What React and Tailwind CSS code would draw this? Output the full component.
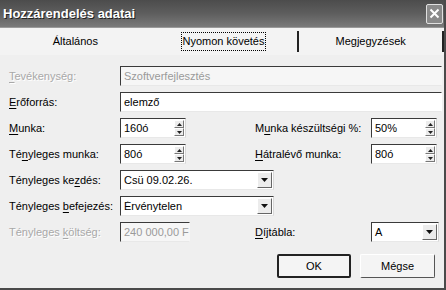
import React from 'react';

const Acc = ({ children }) => <span className="underline underline-offset-2">{children}</span>;

function Label({ children, disabled, w = 'w-[111px]' }) {
  return (
    <div
      className={`${w} shrink-0 whitespace-nowrap ${
        disabled ? 'text-[#a8a8a8] [text-shadow:1px_1px_0_#ffffff]' : 'text-black'
      }`}
    >
      {children}
    </div>
  );
}

function Field({ value, w, disabled, children, noRight }) {
  return (
    <div
      className={`${w} h-[20px] flex items-center border border-t-[#3a3a3a] border-l-[#3a3a3a] ${
        noRight ? 'border-r-transparent' : 'border-r-[#d8d8d8]'
      } border-b-[#e8e8e8] ${disabled ? 'bg-[#f6f6f6] text-[#9a9a9a]' : 'bg-white text-black'}`}
    >
      <span className="flex-1 pl-[3px] whitespace-nowrap overflow-hidden">{value}</span>
      {children}
    </div>
  );
}

function Spin({ value, w }) {
  return (
    <Field value={value} w={w}>
      <div className="flex flex-col h-full py-[1px] pr-[1px] gap-[0px]">
        {['up', 'down'].map((d) => (
          <div
            key={d}
            className="flex-1 w-[10px] bg-[#ececec] border border-t-white border-l-white border-r-[#777] border-b-[#777] flex items-center justify-center"
          >
            <svg width="5" height="3" viewBox="0 0 5 3">
              <path d={d === 'up' ? 'M0 3 L2.5 0 L5 3 Z' : 'M0 0 L2.5 3 L5 0 Z'} fill="#222" />
            </svg>
          </div>
        ))}
      </div>
    </Field>
  );
}

function Combo({ value, w }) {
  return (
    <Field value={value} w={w}>
      <div className="h-full py-[1px] pr-[1px]">
        <div className="h-full w-[15px] bg-[#ececec] border border-t-white border-l-white border-r-[#666] border-b-[#666] flex items-center justify-center">
          <svg width="7" height="4" viewBox="0 0 7 4">
            <path d="M0 0 L7 0 L3.5 4 Z" fill="#111" />
          </svg>
        </div>
      </div>
    </Field>
  );
}

function Row({ children }) {
  return <div className="flex items-center h-[20px]">{children}</div>;
}

export default function App() {
  return (
    <div className="w-[446px] h-[290px] overflow-hidden bg-[#efefef] flex flex-col font-['Liberation_Sans',Arial,sans-serif] text-[11px] leading-none border-r-2 border-b-2 border-r-[#4a4a4a] border-b-[#4a4a4a]">
      {/* title bar */}
      <div className="h-[28px] shrink-0 flex items-center justify-between bg-gradient-to-b from-[#4c4c4c] via-[#5e5e5e] to-[#7a7a7a] border-b border-[#9a9a9a]">
        <span className="pl-[3px] text-white font-bold text-[13px] [text-shadow:1px_1px_0_#222]">
          Hozzárendelés adatai
        </span>
        <div className="w-[17px] h-[20px] mr-[1px] border border-[#e0e0e0] bg-[#8a8a8a] rounded-[2px] flex items-center justify-center">
          <svg width="11" height="11" viewBox="0 0 11 11">
            <path d="M1.5 1.5 L9.5 9.5 M9.5 1.5 L1.5 9.5" stroke="#fff" strokeWidth="2" />
          </svg>
        </div>
      </div>

      {/* tabs */}
      <div className="h-[27px] shrink-0 flex items-center bg-[#f3f3f3]">
        <div className="w-[150px] flex justify-center pl-[1px]">Általános</div>
        <div className="w-[148px] flex justify-center">
          <span className="border border-dotted border-black px-[1px] py-[3px]">Nyomon követés</span>
        </div>
        <div className="w-[2px] h-[21px] bg-[#222]" />
        <div className="w-[143px] flex justify-center">Megjegyzések</div>
        <div className="w-[2px] h-[21px] bg-[#222]" />
      </div>

      {/* form */}
      <div className="flex flex-col pl-[9px] pt-[11px] gap-[6px]">
        <Row>
          <Label disabled>
            <Acc>T</Acc>evékenység:
          </Label>
          <Field value="Szoftverfejlesztés" w="w-[322px]" disabled noRight />
        </Row>
        <Row>
          <Label>
            <Acc>E</Acc>rőforrás:
          </Label>
          <Field value="elemző" w="w-[322px]" noRight />
        </Row>
        <Row>
          <Label>
            <Acc>M</Acc>unka:
          </Label>
          <Spin value="160ó" w="w-[66px]" />
          <div className="w-[69px]" />
          <Label w="w-[116px]">
            M<Acc>u</Acc>nka készültségi %:
          </Label>
          <Spin value="50%" w="w-[66px]" />
        </Row>
        <Row>
          <Label>
            Té<Acc>n</Acc>yleges munka:
          </Label>
          <Spin value="80ó" w="w-[66px]" />
          <div className="w-[69px]" />
          <Label w="w-[116px]">
            <Acc>H</Acc>átralévő munka:
          </Label>
          <Spin value="80ó" w="w-[66px]" />
        </Row>
        <Row>
          <Label>
            Tényleges ke<Acc>z</Acc>dés:
          </Label>
          <Combo value="Csü 09.02.26." w="w-[154px]" />
        </Row>
        <Row>
          <Label>
            Tényleges <Acc>b</Acc>efejezés:
          </Label>
          <Combo value="Érvénytelen" w="w-[154px]" />
        </Row>
        <Row>
          <Label disabled>
            Tényleges <Acc>k</Acc>öltség:
          </Label>
          <Field value="240 000,00 F" w="w-[70px]" disabled noRight />
          <div className="w-[65px]" />
          <Label w="w-[116px]">
            <Acc>D</Acc>íjtábla:
          </Label>
          <Combo value="A" w="w-[68px]" />
        </Row>
      </div>

      {/* buttons */}
      <div className="flex justify-end gap-[9px] pr-[9px] pt-[12px]">
        <button className="w-[74px] h-[24px] bg-[#f4f4f4] border-2 border-[#222] rounded-[2px] text-black text-[11px]">
          OK
        </button>
        <button className="w-[75px] h-[24px] bg-[#f4f4f4] border border-t-white border-l-white border-r-[#555] border-b-[#555] rounded-[2px] text-black text-[11px]">
          Mégse
        </button>
      </div>
    </div>
  );
}
